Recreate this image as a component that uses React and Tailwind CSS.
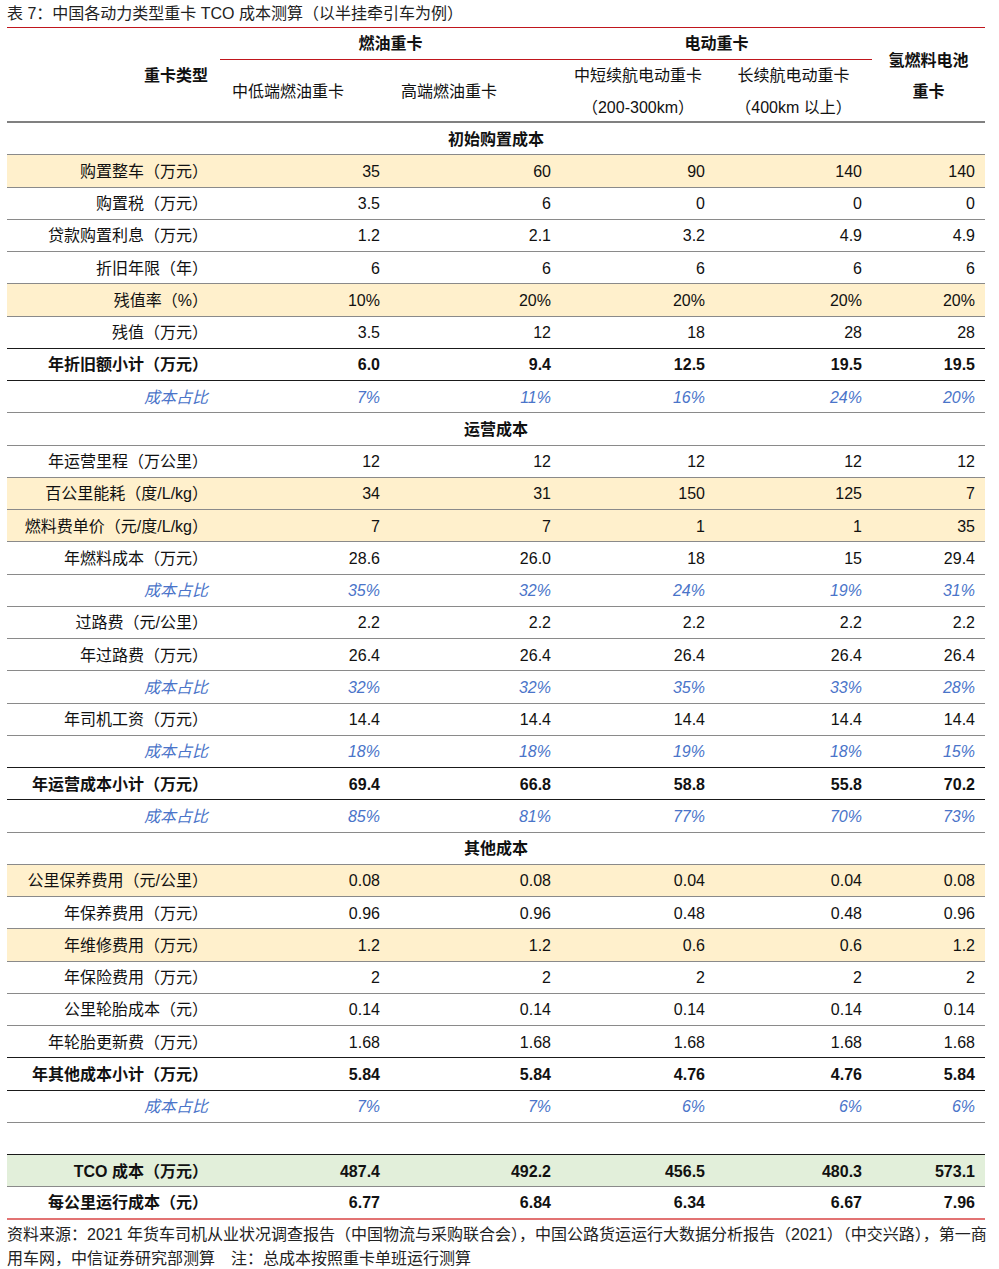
import React from 'react';

const cols = 'grid grid-cols-[213px_170px_171px_154px_157px_113px]';

const rows = [
  { type: 'section', label: '初始购置成本' },
  { label: '购置整车（万元）', values: ['35', '60', '90', '140', '140'], fill: 'beige' },
  { label: '购置税（万元）', values: ['3.5', '6', '0', '0', '0'] },
  { label: '贷款购置利息（万元）', values: ['1.2', '2.1', '3.2', '4.9', '4.9'] },
  { label: '折旧年限（年）', values: ['6', '6', '6', '6', '6'] },
  { label: '残值率（%）', values: ['10%', '20%', '20%', '20%', '20%'], fill: 'beige' },
  { label: '残值（万元）', values: ['3.5', '12', '18', '28', '28'], dark: true },
  { label: '年折旧额小计（万元）', values: ['6.0', '9.4', '12.5', '19.5', '19.5'], bold: true, dark: true },
  { label: '成本占比', values: ['7%', '11%', '16%', '24%', '20%'], share: true },
  { type: 'section', label: '运营成本' },
  { label: '年运营里程（万公里）', values: ['12', '12', '12', '12', '12'] },
  { label: '百公里能耗（度/L/kg）', values: ['34', '31', '150', '125', '7'], fill: 'beige' },
  { label: '燃料费单价（元/度/L/kg）', values: ['7', '7', '1', '1', '35'], fill: 'beige' },
  { label: '年燃料成本（万元）', values: ['28.6', '26.0', '18', '15', '29.4'] },
  { label: '成本占比', values: ['35%', '32%', '24%', '19%', '31%'], share: true },
  { label: '过路费（元/公里）', values: ['2.2', '2.2', '2.2', '2.2', '2.2'] },
  { label: '年过路费（万元）', values: ['26.4', '26.4', '26.4', '26.4', '26.4'] },
  { label: '成本占比', values: ['32%', '32%', '35%', '33%', '28%'], share: true },
  { label: '年司机工资（万元）', values: ['14.4', '14.4', '14.4', '14.4', '14.4'] },
  { label: '成本占比', values: ['18%', '18%', '19%', '18%', '15%'], share: true, dark: true },
  { label: '年运营成本小计（万元）', values: ['69.4', '66.8', '58.8', '55.8', '70.2'], bold: true, dark: true },
  { label: '成本占比', values: ['85%', '81%', '77%', '70%', '73%'], share: true },
  { type: 'section', label: '其他成本' },
  { label: '公里保养费用（元/公里）', values: ['0.08', '0.08', '0.04', '0.04', '0.08'], fill: 'beige' },
  { label: '年保养费用（万元）', values: ['0.96', '0.96', '0.48', '0.48', '0.96'] },
  { label: '年维修费用（万元）', values: ['1.2', '1.2', '0.6', '0.6', '1.2'], fill: 'beige' },
  { label: '年保险费用（万元）', values: ['2', '2', '2', '2', '2'] },
  { label: '公里轮胎成本（元）', values: ['0.14', '0.14', '0.14', '0.14', '0.14'] },
  { label: '年轮胎更新费（万元）', values: ['1.68', '1.68', '1.68', '1.68', '1.68'], dark: true },
  { label: '年其他成本小计（万元）', values: ['5.84', '5.84', '4.76', '4.76', '5.84'], bold: true, dark: true },
  { label: '成本占比', values: ['7%', '7%', '6%', '6%', '6%'], share: true },
  { type: 'blank', dark: true },
  { label: 'TCO 成本（万元）', values: ['487.4', '492.2', '456.5', '480.3', '573.1'], bold: true, fill: 'green' },
  { label: '每公里运行成本（元）', values: ['6.77', '6.84', '6.34', '6.67', '7.96'], bold: true, last: true },
];

const Row = ({ row }) => {
  const border = row.last
    ? 'border-b-2 border-[#e27373]'
    : row.dark
    ? 'border-b border-[#1a1a1a]'
    : 'border-b border-[#8a8a8a]';

  if (row.type === 'section') {
    return (
      <div className={`h-[32.25px] pt-[2px] flex items-center justify-center font-bold ${border}`}>
        {row.label}
      </div>
    );
  }
  if (row.type === 'blank') {
    return <div className={`h-[32.25px] ${border}`} />;
  }

  const bg = row.fill === 'beige' ? 'bg-[#fff0cc]' : row.fill === 'green' ? 'bg-[#e2efda]' : '';
  const text = row.share ? 'italic text-[#4a74c9]' : row.bold ? 'font-bold' : '';

  return (
    <div className={`${cols} h-[32.25px] pt-[2px] items-center ${bg} ${border} ${text}`}>
      <div className="text-right pr-[12px] whitespace-nowrap">{row.label}</div>
      {row.values.map((v, i) => (
        <div key={i} className="text-right pr-[10px]">
          {v}
        </div>
      ))}
    </div>
  );
};

const App = () => {
  return (
    <div className="w-[999px] h-[1269px] bg-white text-[#111] text-[16px] font-['Liberation_Sans','Noto_Sans_CJK_SC',sans-serif]">
      <div className="px-[7px]">
        {/* Title */}
        <div className="h-[27px] flex items-center text-[#222] whitespace-nowrap">
          表 7：中国各动力类型重卡 TCO 成本测算（以半挂牵引车为例）
        </div>

        <div className="w-[978px]">
          {/* Header */}
          <div className={`${cols} grid-rows-[32px_61px] border-t border-[#c0161d] border-b-2 border-b-[#808080]`}>
            <div className="row-span-2 flex items-center justify-end pr-[12px] font-bold pt-[2px]">重卡类型</div>
            <div className="col-span-2 flex items-center justify-center font-bold border-b border-[#c0161d] pt-[1px]">
              燃油重卡
            </div>
            <div className="col-span-2 flex items-center justify-center font-bold border-b border-[#c0161d] pt-[1px]">
              电动重卡
            </div>
            <div className="row-span-2 flex flex-col items-center justify-center font-bold leading-[31px] pt-[2px]">
              <span>氢燃料电池</span>
              <span>重卡</span>
            </div>
            <div className="flex items-center pl-[12px] whitespace-nowrap pt-[2px]">中低端燃油重卡</div>
            <div className="flex items-center pl-[11px] whitespace-nowrap pt-[2px]">高端燃油重卡</div>
            <div className="flex flex-col items-center justify-center leading-[32px] whitespace-nowrap pt-[2px]">
              <span>中短续航电动重卡</span>
              <span>（200-300km）</span>
            </div>
            <div className="flex flex-col items-center justify-center leading-[32px] whitespace-nowrap pt-[2px]">
              <span>长续航电动重卡</span>
              <span>（400km 以上）</span>
            </div>
          </div>

          {/* Body */}
          {rows.map((row, i) => (
            <Row key={i} row={row} />
          ))}
        </div>

        {/* Source */}
        <div className="mt-[3px] leading-[24px] text-[#222] whitespace-nowrap">
          <div>资料来源：2021 年货车司机从业状况调查报告（中国物流与采购联合会），中国公路货运运行大数据分析报告（2021）（中交兴路），第一商</div>
          <div>用车网，中信证券研究部测算　注：总成本按照重卡单班运行测算</div>
        </div>
      </div>
    </div>
  );
};

export default App;
